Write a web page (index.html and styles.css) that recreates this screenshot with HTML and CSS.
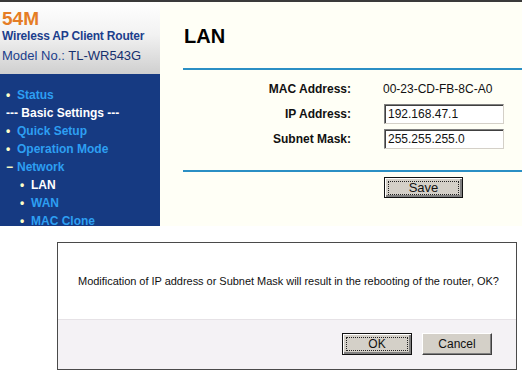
FILE: index.html
```html
<!DOCTYPE html>
<html lang="en">
<head>
  <meta charset="UTF-8">
  <title>LAN</title>
  <link rel="stylesheet" href="styles.css">
</head>
<body>

  <div class="page">
    <div class="side">
      <div class="brand">
        <div class="speed">54M</div>
        <div class="product">Wireless AP Client Router</div>
        <div class="model">Model No.: <span>TL-WR543G</span></div>
      </div>
      <ul class="menu">
        <li><span class="dot">•</span>Status</li>
        <li class="group">--- Basic Settings ---</li>
        <li><span class="dot">•</span>Quick Setup</li>
        <li><span class="dot">•</span>Operation Mode</li>
        <li><span class="dash">−</span>Network</li>
        <li class="sub current"><span class="dot">•</span>LAN</li>
        <li class="sub"><span class="dot">•</span>WAN</li>
        <li class="sub"><span class="dot">•</span>MAC Clone</li>
      </ul>
    </div>

    <div class="main">
      <h1>LAN</h1>
      <div class="rule"></div>
      <div class="form">
        <label>MAC Address:</label>
        <span class="value">00-23-CD-FB-8C-A0</span>
        <label>IP Address:</label>
        <input type="text" value="192.168.47.1">
        <label>Subnet Mask:</label>
        <input type="text" value="255.255.255.0">
      </div>
      <div class="rule"></div>
      <div class="actions">
        <button class="btn default"><span>Save</span></button>
      </div>
    </div>
  </div>

  <div class="overlay">
    <div class="dialog">
      <p class="message">Modification of IP address or Subnet Mask will result in the rebooting of the router, OK?</p>
      <div class="dialog-buttons">
        <button class="btn default"><span>OK</span></button>
        <button class="btn"><span>Cancel</span></button>
      </div>
    </div>
  </div>

</body>
</html>
```

FILE: styles.css
```css
body {
  margin: 0;
  background-color: white;
  font-family: "Liberation Sans", Arial, sans-serif;
}

.page {
  display: flex;
  height: 224px;
  border-top: 2px solid #3a3a3a;
}

.side {
  width: 160px;
  display: flex;
  flex-direction: column;
}

.brand {
  height: 72px;
  box-sizing: border-box;
  padding: 6px 0 0 2px;
  background: linear-gradient(#ffffff, #f2f2f2 45%, #cfcfcf);
}

.speed {
  color: #e57d25;
  font-size: 19px;
  font-weight: bold;
  line-height: 21px;
}

.product {
  color: #1c3e8c;
  font-size: 12px;
  font-weight: bold;
  line-height: 15px;
  letter-spacing: -0.2px;
}

.model {
  color: #1c3e8c;
  font-size: 13px;
  line-height: 20px;
  margin-top: 2px;
}

.model span {
  color: #15306e;
}

.menu {
  flex: 1;
  margin: 0;
  padding: 12px 0 0 6px;
  list-style: none;
  background-color: #163a82;
  overflow: hidden;
}

.menu li {
  color: #2d9ff2;
  font-size: 12px;
  font-weight: bold;
  line-height: 18px;
  white-space: nowrap;
}

.menu li.group {
  color: white;
}

.menu li.sub {
  padding-left: 14px;
}

.menu li.current {
  color: white;
}

.dot, .dash {
  display: inline-block;
  width: 11px;
  color: #ffffc8;
}

.main {
  flex: 1;
  background-color: #fffff6;
  padding-left: 23px;
}

.main h1 {
  margin: 0;
  padding: 22px 0 0 1px;
  font-size: 20px;
  line-height: 24px;
}

.rule {
  height: 2px;
  background-color: #2b8fc4;
  margin-top: 20px;
}

.form {
  display: grid;
  grid-template-columns: 168px 120px;
  column-gap: 33px;
  grid-auto-rows: 25px;
  align-items: center;
  padding-top: 6px;
}

.form label {
  text-align: right;
  font-size: 12px;
  font-weight: bold;
  color: #111;
}

.value {
  font-size: 12px;
  margin-left: -1px;
  color: #111;
}

.form input {
  width: 120px;
  height: 20px;
  box-sizing: border-box;
  margin: 0;
  padding: 0 3px;
  font-family: inherit;
  font-size: 12px;
  color: #111;
  background: white;
  border: 1px solid;
  border-color: #808080 #d4d0c8 #d4d0c8 #808080;
  box-shadow: inset 1px 1px #404040;
}

.main .form + .rule {
  margin-top: 19px;
}

.actions {
  padding: 5px 0 0 201px;
}

.btn {
  width: 70px;
  height: 22px;
  padding: 0;
  margin: 0;
  font-family: inherit;
  font-size: 12px;
  color: #111;
  background-color: #d4d0c8;
  border: 1px solid;
  border-color: #ffffff #404040 #404040 #ffffff;
  box-shadow: inset -1px -1px #808080;
}

.btn.default {
  border-color: #111;
  box-shadow: inset 1px 1px #ffffff, inset -2px -2px #808080;
}

.btn.default span {
  display: block;
  margin: 3px;
  line-height: 12px;
  border: 1px dotted #222;
}

.actions .btn {
  width: 79px;
  height: 21px;
  font-size: 13px;
}

.overlay {
  padding: 16px 0 0 57px;
}

.dialog {
  width: 460px;
  height: 128px;
  box-sizing: border-box;
  border: 1px solid #4a4a4a;
  display: flex;
  flex-direction: column;
}

.message {
  margin: 0;
  height: 76px;
  padding-left: 20px;
  font-size: 11px;
  line-height: 76px;
  color: #111;
  white-space: nowrap;
  letter-spacing: -0.03px;
  border-bottom: 1px solid #e6e2e6;
}

.dialog-buttons {
  flex: 1;
  background-color: #f4f2f5;
  display: flex;
  justify-content: flex-end;
  gap: 10px;
  padding: 13px 24px 0 0;
}
```
